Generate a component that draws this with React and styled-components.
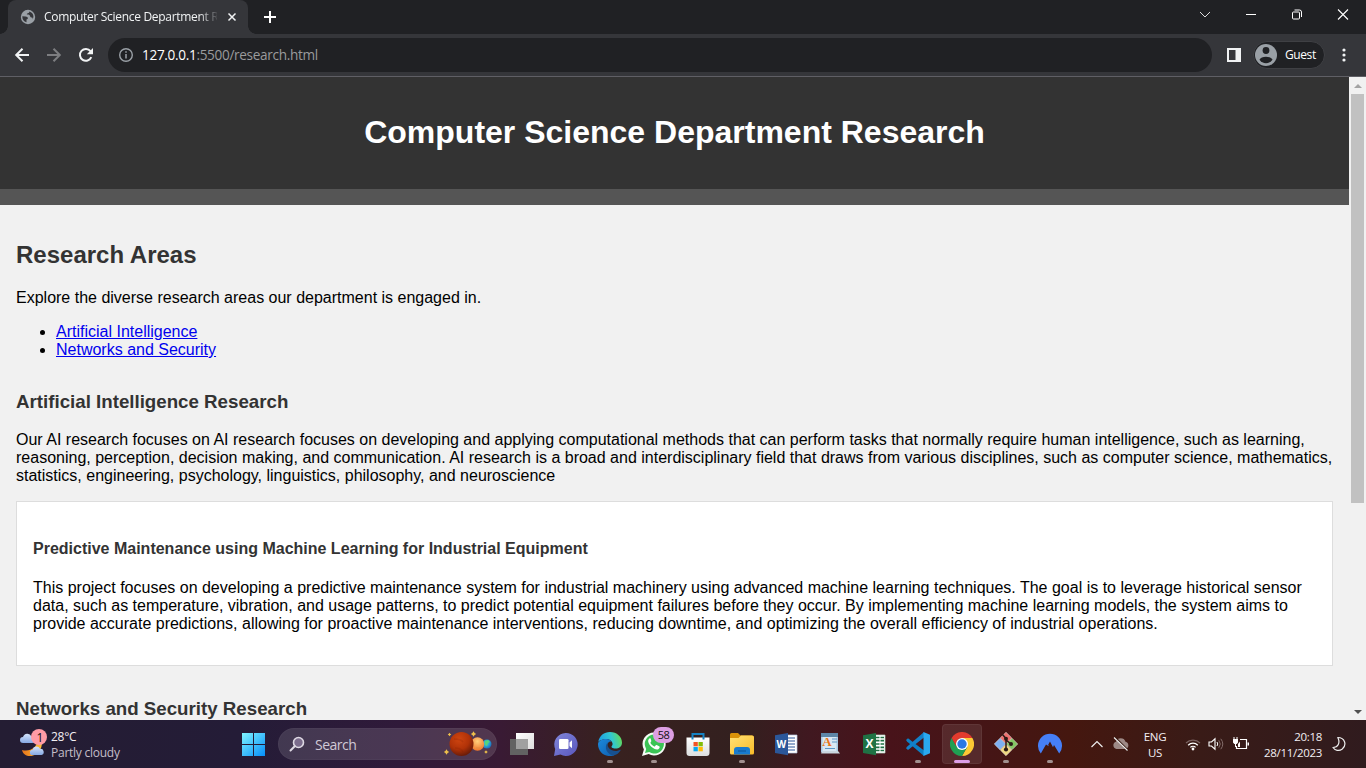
import React from "react";
import styled, { createGlobalStyle } from "styled-components";

const Global = createGlobalStyle`
  *, *::before, *::after { box-sizing: border-box; }
  html, body { margin: 0; height: 100%; overflow: hidden; }
  svg { display: block; flex: none; }
`;

const uiFont = `"Open Sans", "Noto Sans", sans-serif`;

const Screen = styled.div`
  width: 1366px;
  height: 768px;
  display: flex;
  flex-direction: column;
  overflow: hidden;
  font-family: "Liberation Sans", Arial, sans-serif;
`;

/* ---------- browser frame ---------- */
const TabStrip = styled.div`
  height: 34px;
  flex: none;
  background: #202124;
  display: flex;
  padding-left: 8px;
`;
const Tab = styled.div`
  position: relative;
  width: 240px;
  height: 34px;
  background: #35363a;
  border-radius: 8px 8px 0 0;
  display: flex;
  align-items: center;
  padding-left: 12px;
  &::before, &::after {
    content: "";
    position: absolute;
    bottom: 0;
    width: 8px;
    height: 8px;
  }
  &::before { left: -8px; background: radial-gradient(circle at 0 0, #202124 7.5px, #35363a 8px); }
  &::after { right: -8px; background: radial-gradient(circle at 100% 0, #202124 7.5px, #35363a 8px); }
`;
const TabTitle = styled.div`
  margin-left: 8px;
  width: 173px;
  white-space: nowrap;
  font: 12px/18px ${uiFont};
  letter-spacing: -0.31px;
  color: #f1f3f4;
  -webkit-mask-image: linear-gradient(90deg, #000 155px, transparent 175px);
  mask-image: linear-gradient(90deg, #000 155px, transparent 175px);
`;
const TabClose = styled.div`
  margin-left: 10px;
`;
const NewTab = styled.div`
  width: 44px;
  display: flex;
  align-items: center;
  justify-content: center;
`;
const WindowButtons = styled.div`
  margin-left: auto;
  display: flex;
  height: 29px;
`;
const WindowButton = styled.div`
  width: 46px;
  display: flex;
  align-items: center;
  justify-content: center;
`;
const Toolbar = styled.div`
  height: 43px;
  flex: none;
  background: #35363a;
  border-bottom: 1px solid #5f5f65;
  display: flex;
  align-items: center;
`;
const NavButton = styled.div`
  width: 32px;
  display: flex;
  justify-content: center;
`;
const NavGroup = styled.div`
  display: flex;
  padding-left: 6px;
`;
const AddressBar = styled.div`
  margin-left: 6px;
  width: 1104px;
  height: 34px;
  border-radius: 17px;
  background: #202124;
  display: flex;
  align-items: center;
  padding-left: 10px;
`;
const Url = styled.div`
  margin-left: 8px;
  font: 13.6px/20px ${uiFont};
  letter-spacing: -0.33px;
  color: #9a9a9c;
  white-space: nowrap;
  & b { font-weight: 400; color: #fff; }
`;
const SidePanel = styled.div`
  margin-left: 15px;
`;
const Profile = styled.div`
  margin-left: 12px;
  width: 72px;
  height: 28px;
  border-radius: 14px;
  border: 1px solid #3f4044;
  background: #202124;
  display: flex;
  align-items: center;
  padding-left: 1px;
  font: 12px/16px ${uiFont};
  letter-spacing: -0.4px;
  color: #fff;
  & span { margin-left: 8px; }
`;
const MenuButton = styled.div`
  margin-left: 16px;
`;

/* ---------- page ---------- */
const Viewport = styled.div`
  height: 643px;
  flex: none;
  display: flex;
  overflow: hidden;
`;
const Page = styled.div`
  width: 1349px;
  background: #f1f1f1;
  overflow: hidden;
  font-size: 16px;
  line-height: 18px;
  color: #000;
`;
const Header = styled.header`
  height: 112px;
  background: #333;
  color: #fff;
  text-align: center;
  padding: 37px 16px 0;
`;
const Title = styled.h1`
  margin: 0;
  font-size: 32px;
  line-height: 37px;
`;
const NavStrip = styled.nav`
  height: 16px;
  background: #555;
`;
const Main = styled.main`
  padding: 36px 16px 0;
`;
const AreaTitle = styled.h2`
  margin: 0 0 21px;
  font-size: 24px;
  line-height: 27px;
  color: #333;
`;
const Paragraph = styled.p`
  margin: 0 0 16px;
  white-space: nowrap;
`;
const TextLine = styled.span`
  display: block;
  width: max-content;
`;
const LinkList = styled.ul`
  margin: 0 0 32px;
  padding-left: 40px;
`;
const Anchor = styled.a`
  color: #0000ee;
`;
const SectionTitle = styled.h3`
  margin: 0 0 18px;
  font-size: 18.72px;
  line-height: 22px;
  color: #333;
`;
const Card = styled.article`
  margin-bottom: 32px;
  border: 1px solid #ddd;
  background: #fff;
  padding: 38px 16px 16px;
  height: 165px;
`;
const CardTitle = styled.h4`
  margin: 0 0 21px;
  font-size: 16px;
  line-height: 18px;
  color: #333;
`;
const Scrollbar = styled.div`
  width: 17px;
  background: #f1f1f1;
  display: flex;
  flex-direction: column;
  align-items: center;
`;
const ScrollArrow = styled.div`
  height: 17px;
  display: flex;
  align-items: center;
`;
const Thumb = styled.div`
  width: 13px;
  height: 409px;
  background: #c1c1c1;
  margin-bottom: auto;
`;

/* ---------- taskbar ---------- */
const Taskbar = styled.div`
  height: 48px;
  flex: none;
  display: flex;
  align-items: center;
  font-family: ${uiFont};
  color: #f3eff3;
  background: linear-gradient(90deg, #241d33 0, #241c37 240px, #301a3a 400px, #391a34 500px, #38211f 610px, #33201f 740px, #401820 810px, #48131a 890px, #451516 980px, #45170f 1070px, #391b17 1200px, #301b1e 1366px);
`;
const Weather = styled.div`
  width: 231px;
  display: flex;
  align-items: center;
  padding-left: 18px;
`;
const WeatherText = styled.div`
  margin-left: 3px;
  margin-top: 1px;
  font-size: 12px;
  line-height: 16px;
  letter-spacing: -0.25px;
  & div + div { color: #c4bfc9; }
`;
const Slot = styled.div`
  position: relative;
  width: 44px;
  height: 48px;
  display: flex;
  align-items: center;
  justify-content: center;
`;
const ActivePlate = styled.div`
  width: 40px;
  height: 40px;
  border-radius: 4px;
  background: rgba(255, 255, 255, 0.09);
  border: 1px solid rgba(255, 255, 255, 0.06);
  display: flex;
  align-items: center;
  justify-content: center;
`;
const Indicator = styled.i`
  position: absolute;
  left: 50%;
  bottom: 5px;
  transform: translateX(-50%);
  width: ${(p) => (p.$active ? 16 : 6)}px;
  height: 3px;
  border-radius: 2px;
  background: ${(p) => (p.$active ? "#dd9fe8" : "#a1908f")};
`;
const Badge = styled.span`
  position: absolute;
  top: 7px;
  left: 21px;
  width: 21px;
  height: 16px;
  border-radius: 8px;
  background: #dd9fe3;
  color: #111;
  font-size: 11px;
  line-height: 16px;
  letter-spacing: -0.5px;
  text-align: center;
`;
const SearchBox = styled.div`
  margin: 0 3px;
  width: 219px;
  height: 32px;
  border-radius: 16px;
  background: rgba(255, 255, 255, 0.13);
  border: 1px solid rgba(255, 255, 255, 0.03);
  display: flex;
  align-items: center;
  padding: 0 3px 0 10px;
  font-size: 14px;
  color: #d0c8d6;
  & > span { margin: 0 auto 0 10px; letter-spacing: -0.5px; }
`;
const Tray = styled.div`
  margin-left: 16px;
  display: flex;
  align-items: center;
  flex: 1;
`;
const TrayItem = styled.div`
  width: ${(p) => p.$w}px;
  display: flex;
  justify-content: center;
`;
const TrayText = styled.div`
  width: ${(p) => p.$w}px;
  margin-top: 1px;
  font-size: 11.5px;
  line-height: 16px;
  text-align: ${(p) => p.$align};
  letter-spacing: -0.3px;
`;

const Svg = ({ w = 24, h = 24, children, ...rest }) => (
  <svg width={w} height={h} viewBox={`0 0 ${w} ${h}`} fill="none" {...rest}>{children}</svg>
);

const GlobeIcon = () => (
  <Svg w={16} h={16}>
    <circle cx="8" cy="8" r="7.200" fill="#9aa0a6" />
    <path d="M2.300 7.200l3.200.2c1.500.1 2.300.7 2.400 1.700.1.800-.6 1.300-1.400 1.500v2.700C3.800 12.600 2.200 10.500 2.300 7.200zM9.300 2.500c.1 1-.6 1.600-1.500 1.700-.8.100-.9.600-.9 1.300 1.800-.2 3 .4 3.200 1.700.2 1 1 1.200 1.900 1.300.7.200.8 1 .5 2 1.600-2.300 1.400-6.500-3.200-8z" fill="#35363a" />
  </Svg>
);

const WeatherIcon = () => (
  <Svg w={30} h={30}>
    <defs>
      <linearGradient id="cl" x1="0" y1="0" x2="0" y2="1"><stop stopColor="#d5e4fc" /><stop offset="1" stopColor="#86a9e4" /></linearGradient>
      <linearGradient id="mn" x1="0" y1="0" x2="1" y2="0"><stop stopColor="#e8731a" /><stop offset="1" stopColor="#fdc23a" /></linearGradient>
    </defs>
    <path d="M23 10c3 7-2 17-11 17-4 0-7-2-8-6 8 2 15-2 16-11z" fill="url(#mn)" />
    <path d="M5 14a3 3 0 0 1 0-6 4.500 4.500 0 0 1 8.500-.5 3.300 3.300 0 0 1 1 6.500z" fill="url(#cl)" />
    <path d="M14.500 26a2.600 2.600 0 0 1 0-5.200 4 4 0 0 1 7.500-1 3.200 3.200 0 0 1 1.500 6.200z" fill="url(#cl)" />
    <circle cx="21" cy="8" r="8" fill="#ff9ba6" />
    <text x="22" y="12.500" textAnchor="middle" fontFamily="Open Sans" fontSize="12" fill="#111">1</text>
  </Svg>
);

const StartIcon = () => (
  <Svg>
    <defs><linearGradient id="st" gradientUnits="userSpaceOnUse" x1="2" y1="1" x2="23" y2="23"><stop stopColor="#7df2ff" /><stop offset="1" stopColor="#0a92fa" /></linearGradient></defs>
    <path d="M1 1h11v11H1zM13 1h11v11H13zM1 13h11v11H1zM13 13h11v11H13z" fill="url(#st)" />
  </Svg>
);

const SearchIcon = () => (
  <Svg w={16} h={16}>
    <circle cx="9.500" cy="6.500" r="5" fill="#7b6c8c" stroke="#ded9e3" strokeWidth="1.600" />
    <path d="M5.700 10.300L1.500 14.500" stroke="#ded9e3" strokeWidth="2" strokeLinecap="round" />
  </Svg>
);

const star = (x, y, r) => `M${x} ${y - r}L${x + r * 0.4} ${y - r * 0.4}L${x + r} ${y}L${x + r * 0.4} ${y + r * 0.4}L${x} ${y + r}L${x - r * 0.4} ${y + r * 0.4}L${x - r} ${y}L${x - r * 0.4} ${y - r * 0.4}Z`;
const PlanetsIcon = () => (
  <Svg w={50} h={26}>
    <defs>
      <radialGradient id="p1" cx=".4" cy=".3" r=".7"><stop stopColor="#cf4510" /><stop offset=".6" stopColor="#b03208" /><stop offset="1" stopColor="#6c1c08" /></radialGradient>
      <radialGradient id="p2" cx=".5" cy=".3" r=".7"><stop stopColor="#ffd07c" /><stop offset="1" stopColor="#ef762c" /></radialGradient>
      <radialGradient id="p3" cx=".4" cy=".4" r=".7"><stop stopColor="#41dac8" /><stop offset=".6" stopColor="#2796cd" /><stop offset="1" stopColor="#195bb4" /></radialGradient>
    </defs>
    <circle cx="44" cy="13" r="4.500" fill="url(#p3)" />
    <path d="M42 10l3-1 2 2-2 1-1 3-2-1z" fill="#53d47c" />
    <circle cx="34.500" cy="13" r="6.700" fill="url(#p2)" />
    <path d="M33 17h4" stroke="#d88a42" strokeWidth=".6" />
    <circle cx="18.500" cy="13" r="12" fill="url(#p1)" />
    <path d="M11 8q7 0 9 3M12 17q6 0 8 4" stroke="#7d1d05" strokeWidth="1.500" opacity=".2" />
    <path d={star(30.5, 3, 2.7) + star(3.5, 21, 2.7) + star(6.5, 3.5, 1.8) + star(43, 21, 1.8)} fill="#efc04b" />
  </Svg>
);

const TaskViewIcon = () => (
  <Svg>
    <defs><linearGradient id="tv" x1="0" y1="0" x2="1" y2="1"><stop stopColor="#fff" /><stop offset="1" stopColor="#ddd" /></linearGradient></defs>
    <path d="M6 1h18v16H6z" fill="url(#tv)" /><path d="M0 7h18v16H0z" fill="#626262" /><path d="M6 7h12v10H6z" fill="#a0a0a0" />
  </Svg>
);

const ChatIcon = () => (
  <Svg>
    <defs><linearGradient id="ch" x1="0" y1="0" x2="1" y2="1"><stop stopColor="#8186da" /><stop offset="1" stopColor="#5956bd" /></linearGradient></defs>
    <path d="M11.500 1a11.500 11.500 0 1 1-5 21.500L0 24l1.200-7A11.500 11.500 0 0 1 11.500 1z" fill="url(#ch)" />
    <rect x="5" y="7" width="9.500" height="10" rx="1.300" fill="#fff" /><path d="M15.500 10.500L18 8.200v8L15.500 14z" fill="#fff" />
  </Svg>
);

const EdgeIcon = () => (
  <Svg>
    <defs>
      <linearGradient id="e1" x1="0" y1=".4" x2="1" y2=".2"><stop stopColor="#1c9de2" /><stop offset=".55" stopColor="#32c8cf" /><stop offset="1" stopColor="#67dc4c" /></linearGradient>
      <linearGradient id="e2" x1="0" y1="0" x2="1" y2="1"><stop stopColor="#1b89dc" /><stop offset="1" stopColor="#0f5fb0" /></linearGradient>
    </defs>
    <path d="M.2 10C1.500 3.500 6 0 12 0c7 0 12 5 12 10.500 0 4-3 6-6.500 6-3 0-5-1.200-3.500-2.700C16 11.500 13 7 8.500 7 4 7 1 9 .2 10z" fill="url(#e1)" />
    <path d="M0 12C.3 8.500 4.500 7 8.300 7c2.500 0 4.300 1.300 5.200 2.500-2.500-.3-4.500 1.500-4.500 5 0 4 3.200 8 7.500 8.800C8.500 26.200 0 21 0 12z" fill="url(#e2)" />
    <path d="M9.700 10.300c-1.200 5.200 3 8.700 7.800 8.700 2 0 3.500-.8 4.600-1.300.5-.2.800.1.500.6-1.400 2.600-4 4.700-7.100 5.300C9 22.500 5.500 15.500 9.700 10.300z" fill="#17508f" />
  </Svg>
);

const WhatsAppIcon = () => (
  <Svg>
    <path d="M12.200.5a11.500 11.500 0 1 1-5.500 21.600L0 24l1.900-6.500A11.500 11.500 0 0 1 12.200.5z" fill="#f6fbf6" />
    <path d="M12.300 2.500a9.500 9.500 0 1 1-5 17.500l-4.300 1.100 1.200-4.200A9.500 9.500 0 0 1 12.300 2.500z" fill="#3bc456" />
    <path d="M8.700 6.700c-.5-.7-1.300-.4-2 .5-1.700 2.300 1 6.300 3.600 8.400 2.700 2 5.700 2.800 7 .7.700-1.200.4-1.700-.2-2l-2.400-1.200c-.6-.3-.9.100-1.500.8-.5.700-.8.700-1.400.4-1.500-.7-2.700-2-3.300-3.200-.2-.5 0-.7.500-1.300.4-.5.400-.8.2-1.300z" fill="#fff" />
  </Svg>
);

const StoreIcon = () => (
  <Svg>
    <defs><linearGradient id="sr" x1="0" y1="0" x2="0" y2="1"><stop stopColor="#fff" /><stop offset="1" stopColor="#dcdedf" /></linearGradient></defs>
    <path d="M.5 5.500h23v15.500a3 3 0 0 1-3 3h-17a3 3 0 0 1-3-3z" fill="url(#sr)" />
    <path d="M6.500 7.500V2h11v5.500" stroke="#1683c4" strokeWidth="2" />
    <path d="M7.500 10h4.300v4.300H7.500z" fill="#f35325" /><path d="M12.500 10h4.300v4.300h-4.300z" fill="#81bc06" /><path d="M7.500 15h4.300v4.300H7.500z" fill="#05a6f0" /><path d="M12.500 15h4.300v4.300h-4.300z" fill="#ffba08" />
  </Svg>
);

const FolderIcon = () => (
  <Svg>
    <defs><linearGradient id="fo" x1="0" y1="0" x2="1" y2="1"><stop stopColor="#ffe276" /><stop offset="1" stopColor="#f9bb28" /></linearGradient></defs>
    <path d="M0 2.500Q0 1 1.500 1h6.500l2.500 2.500H22q2 0 2 2V12H0z" fill="#d99208" />
    <path d="M0 6h8.500l2.500-2.500H22a2 2 0 0 1 2 2v15.500a1.500 1.500 0 0 1-1.500 1.500h-21A1.500 1.500 0 0 1 0 21z" fill="url(#fo)" />
    <path d="M4 22.500V18q0-3 3-3h10q3 0 3 3v4.500z" fill="#187bce" /><path d="M8 19h8" stroke="#0d5594" strokeWidth="1" />
  </Svg>
);

const OfficeIcon = ({ letter, color, light, sheet }) => (
  <Svg>
    <path d="M12 3h11v18H12z" fill="#fff" stroke={light} strokeWidth=".7" />
    {sheet
      ? <path d="M14 5.500h3.500M18.500 5.500h3.500M14 8.700h3.500M18.500 8.700h3.500M14 12h3.500M18.500 12h3.500M14 15.300h3.500M18.500 15.300h3.500M14 18.500h3.500M18.500 18.500h3.500" stroke={color} strokeWidth="1.700" />
      : <path d="M13 6h8M13 9h8M13 12h8M13 15h8M13 18h8" stroke={color} strokeWidth="1.200" />}
    <path d="M1 3.200L14 1v22.300L1 21z" fill={color} />
    <text x="7.400" y="16.300" textAnchor="middle" fontFamily="Open Sans" fontWeight="700" fontSize={sheet ? 12 : 10} fill="#fff">{letter}</text>
  </Svg>
);

const WordPadIcon = () => (
  <Svg>
    <path d="M3 1.500h17v19H3z" fill="#a9c9e4" /><path d="M3 1h17v4H3z" fill="#5e86a8" />
    <path d="M4.500 5h14v15h-14z" fill="#d9e7f3" />
    <path d="M3 21.500q1-2.500 2-2.500h15l2 2.500z" fill="#c9d5df" />
    <path d="M14 7h5M14 10h5M7 16.500h10" stroke="#5e96c8" strokeWidth="1" />
    <text x="9" y="14" textAnchor="middle" fontFamily="Liberation Serif" fontWeight="700" fontSize="13" fill="#ec7418">A</text>
  </Svg>
);

const CodeIcon = () => (
  <Svg>
    <path d="M0 8l2-1.800L18 18.500V24L1 9.500z" fill="#0d7fc4" />
    <path d="M0 16.200l2 1.800L18 5.500V0L1 14.700z" fill="#1380c8" />
    <path d="M17.500 0L24 2.800v18.400L17.500 24z" fill="#2aa8ef" />
  </Svg>
);

const ChromeIcon = () => (
  <Svg>
    <path d="M12 6h10.400A12 12 0 0 1 12 24l5.200-9z" fill="#fcc934" />
    <path d="M17.200 15L12 24A12 12 0 0 1 1.600 6l5.200 9z" fill="#209f52" />
    <path d="M1.600 6A12 12 0 0 1 22.400 6H12a6 6 0 0 0-5.200 9z" fill="#e33b2e" />
    <circle cx="12" cy="12" r="6" fill="#fff" /><circle cx="12" cy="12" r="4.700" fill="#2b78e4" />
  </Svg>
);

const GitIcon = () => (
  <Svg>
    <g stroke="#e8ded8" strokeWidth=".6">
      <path d="M12 .3l5.800 5.700-5.800 5.800L6.200 6z" fill="#ee706e" /><path d="M6 6.300l5.700 5.700L6 17.700.3 12z" fill="#7db0f2" />
      <path d="M18 6.300l5.700 5.700-5.700 5.700-5.700-5.700z" fill="#83c562" /><path d="M12 12.300l5.700 5.700-5.700 5.700L6.300 18z" fill="#f0d880" />
    </g>
    <path d="M8.500 2.500L12 6.500V18M12 8l5 4" stroke="#2b1a16" strokeWidth="1.500" />
    <circle cx="12" cy="6.800" r="2" fill="#2b1a16" /><circle cx="17" cy="12" r="2" fill="#2b1a16" /><circle cx="12" cy="17.500" r="2.100" fill="#2b1a16" />
  </Svg>
);

const NordIcon = () => (
  <Svg>
    <path d="M2.800 21.500A12 12 0 1 1 21.200 21.500L16 13l-1 2.200L12 9.500l-1.800 3.200.6 1.500L8 12.500z" fill="#467ff7" />
  </Svg>
);

const apps = [
  { Icon: TaskViewIcon },
  { Icon: ChatIcon },
  { Icon: EdgeIcon, running: true },
  { Icon: WhatsAppIcon, running: true, badge: "58" },
  { Icon: StoreIcon },
  { Icon: FolderIcon, running: true },
  { Icon: () => <OfficeIcon letter="W" color="#2b579a" light="#b8c8e2" /> },
  { Icon: WordPadIcon },
  { Icon: () => <OfficeIcon letter="X" color="#1f7244" light="#b5d6c3" sheet /> },
  { Icon: CodeIcon, running: true },
  { Icon: ChromeIcon, active: true },
  { Icon: GitIcon, running: true },
  { Icon: NordIcon, running: true },
];

const BrowserTabs = () => (
  <TabStrip>
    <Tab>
      <GlobeIcon />
      <TabTitle>Computer Science Department R</TabTitle>
      <TabClose><Svg w={10} h={10}><path d="M1.500 1.500l7 7M8.500 1.500l-7 7" stroke="#f1f3f4" strokeWidth="1.500" /></Svg></TabClose>
    </Tab>
    <NewTab><Svg w={14} h={14}><path d="M7 1v12M1 7h12" stroke="#fff" strokeWidth="2" /></Svg></NewTab>
    <WindowButtons>
      <WindowButton><Svg w={12} h={12}><path d="M1 3l5 5 5-5" stroke="#ddd" /></Svg></WindowButton>
      <WindowButton><Svg w={12} h={12}><path d="M1 5.500h10" stroke="#fff" /></Svg></WindowButton>
      <WindowButton><Svg w={12} h={12}><rect x="1.500" y="3" width="7" height="7" rx="1" stroke="#fff" /><path d="M3.500 1h5a2 2 0 0 1 2 2v5" stroke="#fff" /></Svg></WindowButton>
      <WindowButton><Svg w={12} h={12}><path d="M1 .5l10 10M11 .5l-10 10" stroke="#fff" strokeWidth="1.100" /></Svg></WindowButton>
    </WindowButtons>
  </TabStrip>
);

const BrowserToolbar = () => (
  <Toolbar>
    <NavGroup>
      <NavButton><Svg w={16} h={16}><path d="M15 8H2.500M8.500 1.700L2.200 8l6.300 6.300" stroke="#f1f3f4" strokeWidth="2" /></Svg></NavButton>
      <NavButton><Svg w={16} h={16}><path d="M1 8h12.500M7.500 1.700L13.800 8l-6.300 6.300" stroke="#7d7e81" strokeWidth="2" /></Svg></NavButton>
      <NavButton><Svg w={16} h={16}><path d="M13.300 10.100A5.900 5.900 0 1 1 12.500 4.200" stroke="#f1f3f4" strokeWidth="2" /><path d="M15 1v6.200H8.800z" fill="#f1f3f4" /></Svg></NavButton>
    </NavGroup>
    <AddressBar>
      <Svg w={16} h={16}><circle cx="8" cy="8" r="6.300" stroke="#9aa0a6" strokeWidth="1.400" /><path d="M8 7v4.500M8 4.300v1.500" stroke="#9aa0a6" strokeWidth="1.500" /></Svg>
      <Url><b>127.0.0.1</b>:5500/research.html</Url>
    </AddressBar>
    <SidePanel><Svg w={14} h={14}><path d="M0 0h14v14H0zM2 2v10h6.500V2z" fill="#f1f3f4" fillRule="evenodd" /></Svg></SidePanel>
    <Profile>
      <Svg w={22} h={22}><circle cx="11" cy="11" r="11" fill="#9aa0a6" /><circle cx="11" cy="6.500" r="3.400" fill="#202124" /><path d="M4.500 15.800c1.300-4 11.700-4 13 0a8 8 0 0 1-13 0z" fill="#202124" /></Svg>
      <span>Guest</span>
    </Profile>
    <MenuButton><Svg w={6} h={16}><g fill="#f1f3f4"><circle cx="3" cy="3" r="1.600" /><circle cx="3" cy="8" r="1.600" /><circle cx="3" cy="13" r="1.600" /></g></Svg></MenuButton>
  </Toolbar>
);

const ResearchPage = () => (
  <Viewport>
    <Page>
      <Header><Title>Computer Science Department Research</Title></Header>
      <NavStrip />
      <Main>
        <AreaTitle>Research Areas</AreaTitle>
        <Paragraph><TextLine>Explore the diverse research areas our department is engaged in.</TextLine></Paragraph>
        <LinkList>
          <li><Anchor href="#ai">Artificial Intelligence</Anchor></li>
          <li><Anchor href="#networks">Networks and Security</Anchor></li>
        </LinkList>
        <SectionTitle>Artificial Intelligence Research</SectionTitle>
        <Paragraph>
          <TextLine>Our AI research focuses on AI research focuses on developing and applying computational methods that can perform tasks that normally require human intelligence, such as learning,</TextLine>
          <TextLine>reasoning, perception, decision making, and communication. AI research is a broad and interdisciplinary field that draws from various disciplines, such as computer science, mathematics,</TextLine>
          <TextLine>statistics, engineering, psychology, linguistics, philosophy, and neuroscience</TextLine>
        </Paragraph>
        <Card>
          <CardTitle>Predictive Maintenance using Machine Learning for Industrial Equipment</CardTitle>
          <Paragraph>
            <TextLine>This project focuses on developing a predictive maintenance system for industrial machinery using advanced machine learning techniques. The goal is to leverage historical sensor</TextLine>
            <TextLine>data, such as temperature, vibration, and usage patterns, to predict potential equipment failures before they occur. By implementing machine learning models, the system aims to</TextLine>
            <TextLine>provide accurate predictions, allowing for proactive maintenance interventions, reducing downtime, and optimizing the overall efficiency of industrial operations.</TextLine>
          </Paragraph>
        </Card>
        <SectionTitle>Networks and Security Research</SectionTitle>
      </Main>
    </Page>
    <Scrollbar>
      <ScrollArrow><Svg w={8} h={4}><path d="M0 4l4-4 4 4z" fill="#a3a3a3" /></Svg></ScrollArrow>
      <Thumb />
      <ScrollArrow><Svg w={8} h={4}><path d="M0 0l4 4 4-4z" fill="#505050" /></Svg></ScrollArrow>
    </Scrollbar>
  </Viewport>
);

const SystemTaskbar = () => (
  <Taskbar>
    <Weather>
      <WeatherIcon />
      <WeatherText><div>28°C</div><div>Partly cloudy</div></WeatherText>
    </Weather>
    <Slot><StartIcon /></Slot>
    <SearchBox><SearchIcon /><span>Search</span><PlanetsIcon /></SearchBox>
    {apps.map(({ Icon, running, active, badge }, i) => (
      <Slot key={i}>
        {active ? <ActivePlate><Icon /></ActivePlate> : <Icon />}
        {badge && <Badge>{badge}</Badge>}
        {(running || active) && <Indicator $active={active} />}
      </Slot>
    ))}
    <Tray>
      <TrayItem $w={18}><Svg w={14} h={14}><path d="M1.500 10L7 4.500 12.500 10" stroke="#eee" strokeWidth="1.200" /></Svg></TrayItem>
      <TrayItem $w={30}><Svg w={18} h={16}><path d="M4.500 13a3.700 3.700 0 0 1-.5-7.200 5 5 0 0 1 9.500 0A3.700 3.700 0 0 1 13.500 13z" fill="#9d8985" /><path d="M3 1.500L16 14.500" stroke="#35180f" strokeWidth="2" /><path d="M2 1.500L15.500 14.500" stroke="#eee" strokeWidth="1.100" /></Svg></TrayItem>
      <TrayText $w={38} $align="center"><div>ENG</div><div>US</div></TrayText>
      <TrayItem $w={38}><Svg w={16} h={14}><path d="M1 6a10 10 0 0 1 14 0" stroke="#7b6361" strokeWidth="1.200" /><path d="M3.200 8.200a6.800 6.800 0 0 1 9.600 0M5.400 10.400a3.700 3.700 0 0 1 5.200 0" stroke="#fff" strokeWidth="1.300" /><circle cx="8" cy="12" r="1.400" fill="#fff" /></Svg></TrayItem>
      <TrayItem $w={8}><Svg w={16} h={14}><path d="M1 5h2.500L7 1.800v10.400L3.500 9H1z" stroke="#fff" strokeWidth="1.100" /><path d="M9 5q1.500 2 0 4" stroke="#fff" /><path d="M10.800 3.300q3 3.700 0 7.400M12.800 1.800q4 5.200 0 10.400" stroke="#826b69" /></Svg></TrayItem>
      <TrayItem $w={42}><Svg w={18} h={14}><path d="M8 2.500h6.500v9H4.500V9" stroke="#fff" strokeWidth="1.200" /><path d="M15.500 5.500h1.500v3h-1.500zM1 2h5v3.500L4.700 7H2.300L1 5.500z" fill="#fff" /><path d="M2 0v2.500M5 0v2.500M3.500 7v3" stroke="#fff" /><path d="M6 10V7l2-2.500V10z" fill="#fff" /></Svg></TrayItem>
      <TrayText $w={60} $align="right"><div>20:18</div><div>28/11/2023</div></TrayText>
      <TrayItem $w={34}><Svg w={14} h={16}><path d="M5.800 1.500C13 1.500 15 9 10.300 13 7 15.500 3 14.500 1 11.500 6 11.500 8.500 7 5.800 1.500z" stroke="#eee" strokeWidth="1.200" strokeLinejoin="round" /></Svg></TrayItem>
    </Tray>
  </Taskbar>
);

export default function App() {
  return (
    <>
      <Global />
      <Screen>
        <BrowserTabs />
        <BrowserToolbar />
        <ResearchPage />
        <SystemTaskbar />
      </Screen>
    </>
  );
}
